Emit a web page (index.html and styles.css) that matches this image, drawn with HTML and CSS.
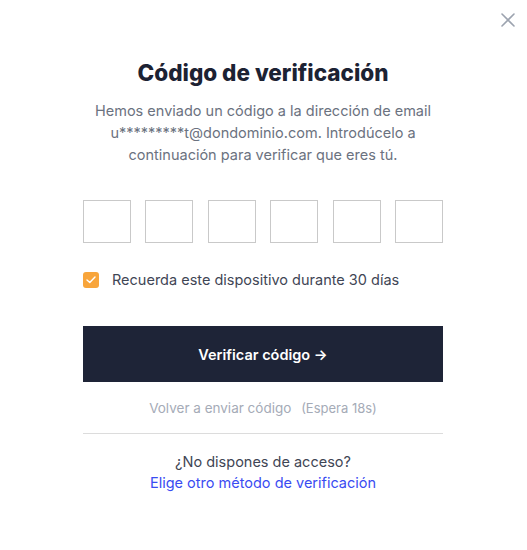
FILE: index.html
```html
<!DOCTYPE html>
<html lang="es">
<head>
    <meta charset="UTF-8">
    <meta name="viewport" content="width=device-width, initial-scale=1.0">
    <title>Código de verificación</title>
    <link rel="stylesheet" href="styles.css">
</head>
<body>
    <div class="modal">
        <button class="close" aria-label="Cerrar">
            <svg width="14" height="14" viewBox="0 0 14 14"><path d="M1 1L13 13M13 1L1 13" stroke="#9ca3af" stroke-width="1.6" stroke-linecap="round"/></svg>
        </button>
        <div class="content">
            <h1 class="title">Código de verificación</h1>
            <p class="intro">Hemos enviado un código a la dirección de email u*********t@dondominio.com. Introdúcelo a continuación para verificar que eres tú.</p>
            <div class="code">
                <input type="text" maxlength="1">
                <input type="text" maxlength="1">
                <input type="text" maxlength="1">
                <input type="text" maxlength="1">
                <input type="text" maxlength="1">
                <input type="text" maxlength="1">
            </div>
            <label class="remember">
                <span class="check">
                    <svg width="10" height="8" viewBox="0 0 10 8"><path d="M1 4L3.8 6.5L9 1" fill="none" stroke="#fff" stroke-width="1.4" stroke-linecap="round" stroke-linejoin="round"/></svg>
                </span>
                Recuerda este dispositivo durante 30 días
            </label>
            <button class="submit">Verificar código →</button>
            <p class="resend">Volver a enviar código <span class="wait">(Espera 18s)</span></p>
            <div class="footer">
                <p>¿No dispones de acceso?</p>
                <a href="#">Elige otro método de verificación</a>
            </div>
        </div>
    </div>
</body>
</html>
```

FILE: styles.css
```css
* {
    margin: 0;
    padding: 0;
    box-sizing: border-box;
    font-family: Inter, "Noto Sans", sans-serif;
}
body {
    background: #fff;
}
.modal {
    position: relative;
    width: 527px;
    height: 550px;
}
.close {
    position: absolute;
    top: 13px;
    right: 12px;
    border: 0;
    background: none;
    cursor: pointer;
}
.content {
    width: 360px;
    margin-left: 83px;
    padding-top: 58px;
    text-align: center;
}
.title {
    font-size: 22.5px;
    font-weight: 800;
    color: #1c2233;
    line-height: 30px;
}
.intro {
    margin-top: 12px;
    font-size: 14.5px;
    line-height: 22px;
    color: #6b7280;
}
.code {
    display: flex;
    justify-content: space-between;
    margin-top: 34px;
}
.code input {
    width: 48px;
    height: 43px;
    border: 1px solid #c9c9c9;
    outline: 0;
    text-align: center;
    font-size: 20px;
}
.remember {
    display: flex;
    align-items: center;
    gap: 13px;
    margin-top: 28px;
    font-size: 14.5px;
    line-height: 18px;
    color: #3f4655;
    text-align: left;
}
.check {
    width: 16px;
    height: 16px;
    border-radius: 3px;
    background: #f8a53b;
    display: flex;
    align-items: center;
    justify-content: center;
}
.submit {
    width: 100%;
    height: 56px;
    margin-top: 37px;
    border: 0;
    background: #1e2437;
    color: #fff;
    font-size: 14.5px;
    font-weight: 600;
    cursor: pointer;
}
.resend {
    margin-top: 18px;
    font-size: 13.5px;
    color: #a5abb7;
    padding-bottom: 17px;
    border-bottom: 1px solid #dcdcdc;
}
.wait {
    margin-left: 6px;
    font-size: 13px;
}
.footer {
    margin-top: 17px;
    font-size: 14.5px;
    line-height: 21px;
    color: #3f4655;
}
.footer a {
    color: #3a4cf2;
    text-decoration: none;
}
```
